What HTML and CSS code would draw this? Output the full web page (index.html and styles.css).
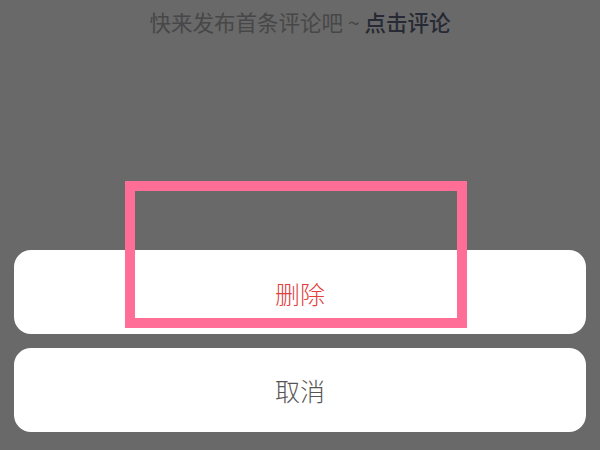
FILE: index.html
```html
<!DOCTYPE html>
<html lang="zh">
<head>
<meta charset="utf-8">
<link rel="stylesheet" href="styles.css">
</head>
<body>
<div class="screen">
  <p class="hint">快来发布首条评论吧 ~ <span class="hint-link">点击评论</span></p>
  <div class="spacer"></div>
  <div class="sheet">
    <button class="action action-danger">删除</button>
    <button class="action">取消</button>
  </div>
  <div class="highlight"></div>
</div>
</body>
</html>
```
FILE: styles.css
```css
html, body {
  margin: 0;
  padding: 0;
}
body {
  background: #696969;
  font-family: "Noto Sans CJK SC", "Noto Sans", sans-serif;
}
.screen {
  position: relative;
  width: 600px;
  height: 450px;
  display: flex;
  flex-direction: column;
  overflow: hidden;
}
.hint {
  margin: 0;
  padding-top: 7px;
  text-align: center;
  font-size: 21.5px;
  line-height: 30px;
  color: #474747;
}
.hint-link {
  color: #272a34;
  font-weight: 500;
}
.spacer {
  flex: 1;
}
.sheet {
  display: flex;
  flex-direction: column;
  gap: 14px;
  padding: 0 14px 18px;
}
.action {
  height: 84px;
  border: none;
  border-radius: 17px;
  background: #ffffff;
  font-family: inherit;
  font-size: 25px;
  font-weight: 300;
  color: #555555;
  padding: 0;
}
.action-danger {
  color: #e2403f;
  padding-top: 1px;
}
.highlight {
  position: absolute;
  left: 125px;
  top: 181px;
  width: 322px;
  height: 127px;
  border: 10px solid #fe6e96;
}
```
